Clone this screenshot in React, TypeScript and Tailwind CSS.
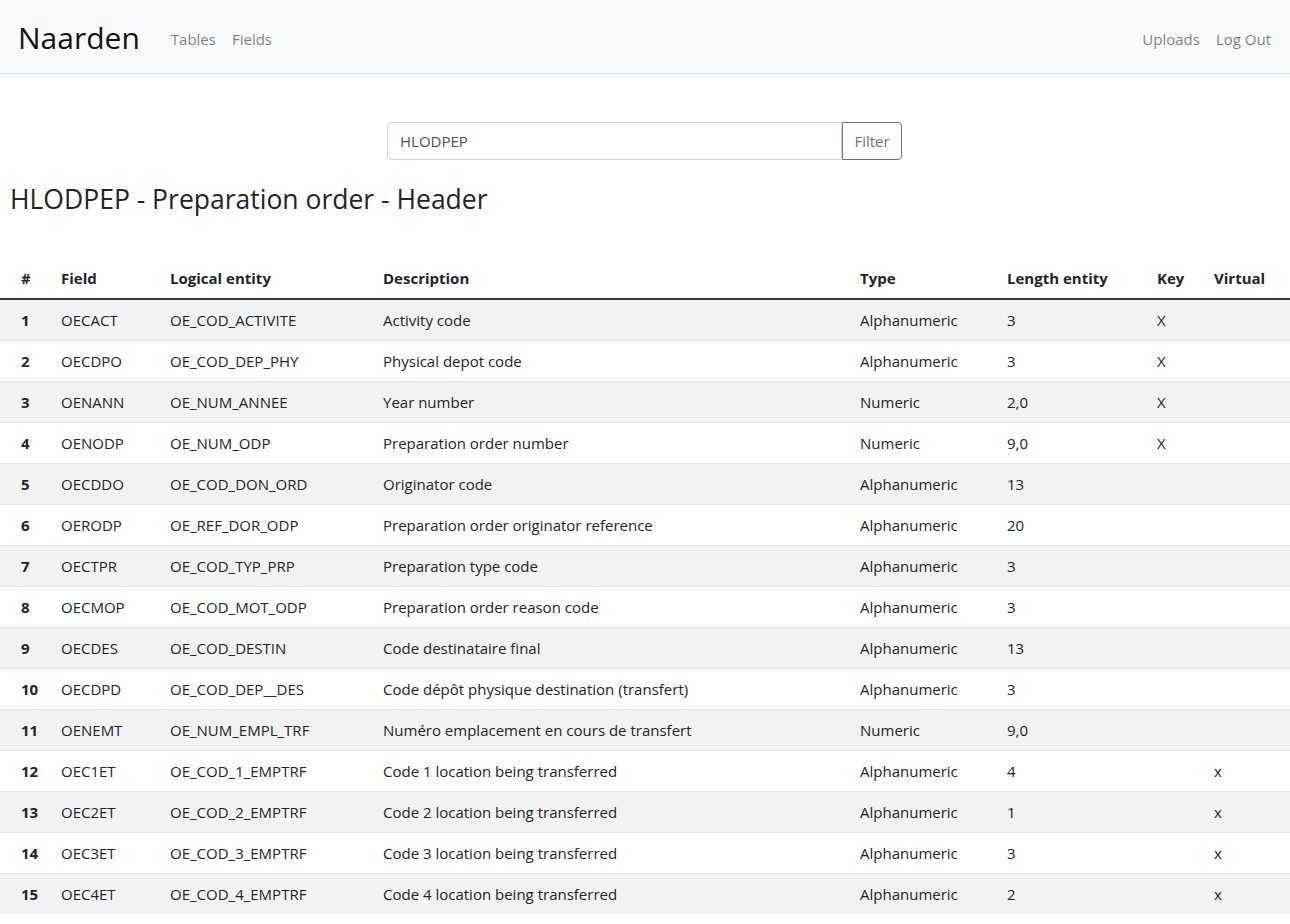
import React from "react"

type Field = [string, string, string, string, string, string, string]

const rows: Field[] = [
  ["OECACT", "OE_COD_ACTIVITE", "Activity code", "Alphanumeric", "3", "X", ""],
  ["OECDPO", "OE_COD_DEP_PHY", "Physical depot code", "Alphanumeric", "3", "X", ""],
  ["OENANN", "OE_NUM_ANNEE", "Year number", "Numeric", "2,0", "X", ""],
  ["OENODP", "OE_NUM_ODP", "Preparation order number", "Numeric", "9,0", "X", ""],
  ["OECDDO", "OE_COD_DON_ORD", "Originator code", "Alphanumeric", "13", "", ""],
  ["OERODP", "OE_REF_DOR_ODP", "Preparation order originator reference", "Alphanumeric", "20", "", ""],
  ["OECTPR", "OE_COD_TYP_PRP", "Preparation type code", "Alphanumeric", "3", "", ""],
  ["OECMOP", "OE_COD_MOT_ODP", "Preparation order reason code", "Alphanumeric", "3", "", ""],
  ["OECDES", "OE_COD_DESTIN", "Code destinataire final", "Alphanumeric", "13", "", ""],
  ["OECDPD", "OE_COD_DEP__DES", "Code dépôt physique destination (transfert)", "Alphanumeric", "3", "", ""],
  ["OENEMT", "OE_NUM_EMPL_TRF", "Numéro emplacement en cours de transfert", "Numeric", "9,0", "", ""],
  ["OEC1ET", "OE_COD_1_EMPTRF", "Code 1 location being transferred", "Alphanumeric", "4", "", "x"],
  ["OEC2ET", "OE_COD_2_EMPTRF", "Code 2 location being transferred", "Alphanumeric", "1", "", "x"],
  ["OEC3ET", "OE_COD_3_EMPTRF", "Code 3 location being transferred", "Alphanumeric", "3", "", "x"],
  ["OEC4ET", "OE_COD_4_EMPTRF", "Code 4 location being transferred", "Alphanumeric", "2", "", "x"],
]

const font = { fontFamily: '"Open Sans", "Noto Sans", sans-serif' }

export default function App() {
  return (
    <div className="min-h-screen bg-white text-[#212529] text-[15px] leading-6" style={font}>
      <nav className="h-[74px] bg-[#f8f9fa] border-b border-[#dfe1e4] flex items-center pl-[18px] pr-[19px] pt-[4px]">
        <a className="text-[30px] leading-none text-[#111] mr-[31px] -mt-[2px]">Naarden</a>
        <div className="flex gap-[16px] text-[rgba(0,0,0,0.5)]">
          <a>Tables</a>
          <a>Fields</a>
        </div>
        <div className="ml-auto flex gap-[16px] text-[rgba(0,0,0,0.5)]">
          <a>Uploads</a>
          <a>Log Out</a>
        </div>
      </nav>

      <div className="flex justify-center mt-[48px] pr-[1px]">
        <div className="flex w-[515px] h-[38px]">
          <input
            className="flex-1 border border-[#ced4da] rounded-l-[4px] px-[12px] text-[#495057] text-[15px] outline-none"
            defaultValue="HLODPEP"
            style={font}
          />
          <button className="w-[60px] border border-[#6c757d] rounded-r-[4px] text-[#6c757d]">Filter</button>
        </div>
      </div>

      <h3 className="text-[26.5px] leading-[34px] ml-[10px] mt-[22px] mb-[42px]">HLODPEP - Preparation order - Header</h3>

      <table className="w-full table-fixed border-collapse">
        <colgroup>
          <col className="w-[49px]" />
          <col className="w-[109px]" />
          <col className="w-[213px]" />
          <col className="w-[477px]" />
          <col className="w-[147px]" />
          <col className="w-[150px]" />
          <col className="w-[57px]" />
          <col />
        </colgroup>
        <thead>
          <tr className="font-bold text-left">
            <th className="pl-[21px] pr-0 py-2 border-b-2 border-[#343a40]">#</th>
            <th className="px-3 py-2 border-b-2 border-[#343a40]">Field</th>
            <th className="px-3 py-2 border-b-2 border-[#343a40]">Logical entity</th>
            <th className="px-3 py-2 border-b-2 border-[#343a40]">Description</th>
            <th className="px-3 py-2 border-b-2 border-[#343a40]">Type</th>
            <th className="px-3 py-2 border-b-2 border-[#343a40]">Length entity</th>
            <th className="px-3 py-2 border-b-2 border-[#343a40]">Key</th>
            <th className="px-3 py-2 border-b-2 border-[#343a40]">Virtual</th>
          </tr>
        </thead>
        <tbody>
          {rows.map((r, i) => (
            <tr key={r[0]} className={i % 2 === 0 ? "bg-[#f2f2f2]" : "bg-white"}>
              <td className="pl-[21px] pr-0 py-2 border-t border-[#dee2e6] font-bold">{i + 1}</td>
              {r.map((c, j) => (
                <td key={j} className="px-3 py-2 border-t border-[#dee2e6] whitespace-nowrap">
                  {c}
                </td>
              ))}
            </tr>
          ))}
        </tbody>
      </table>
    </div>
  )
}
